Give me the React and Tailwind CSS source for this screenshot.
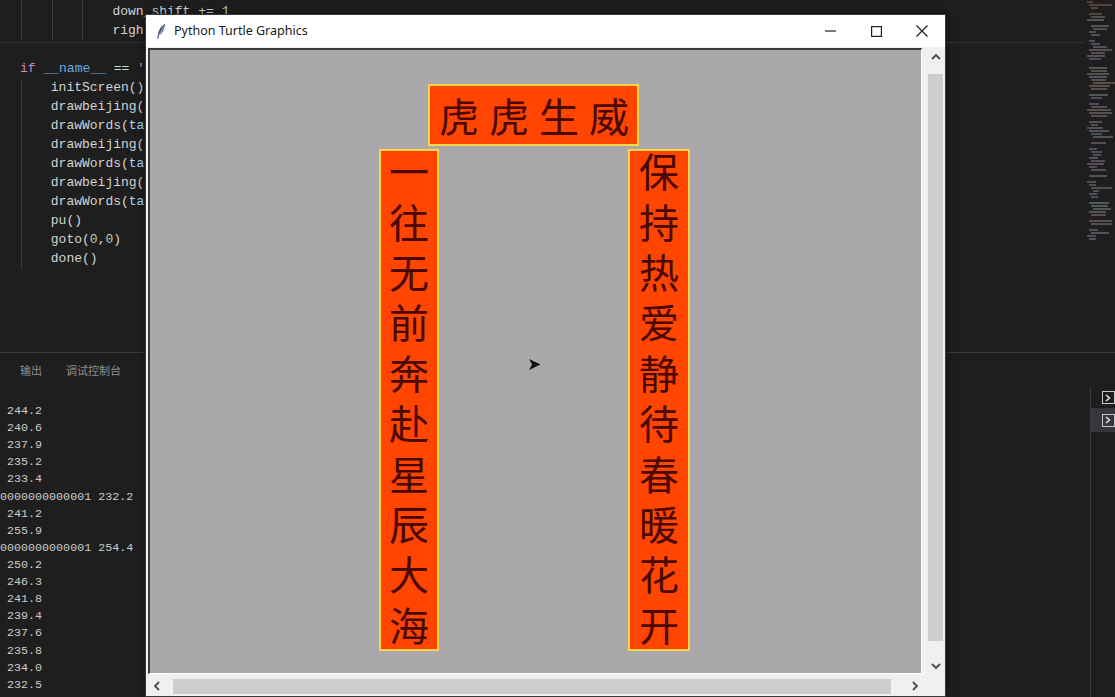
import React from "react";

const mono = "font-['Liberation_Mono','DejaVu_Sans_Mono',monospace]";

function Code({ indent = 0, children }) {
  return (
    <div className="h-[19px] leading-[19px] whitespace-pre" style={{ paddingLeft: 20 + indent * 7.7 }}>
      {children}
    </div>
  );
}

const outputLines = [
  " 244.2", " 240.6", " 237.9", " 235.2", " 233.4",
  "0000000000001 232.2", " 241.2", " 255.9", "0000000000001 254.4",
  " 250.2", " 246.3", " 241.8", " 239.4", " 237.6", " 235.8", " 234.0", " 232.5", " 237.3",
];

// deterministic pseudo-random minimap rows
const mini = Array.from({ length: 80 }, (_, i) => {
  const r = (Math.sin(i * 12.9898) * 43758.5453) % 1;
  const v = Math.abs(r);
  const blank = i % 9 === 3 || i % 13 === 7;
  const indent = [2, 4, 6, 8, 4, 6][i % 6];
  const w = blank ? 0 : Math.round(6 + v * 18);
  const colors = ["#8a8aa8", "#7f8aa6", "#9a8a96", "#8a9aa0", "#a08a80"];
  const c = i < 5 ? "#a07060" : colors[Math.floor(v * 5) % 5];
  return [indent, w, c];
});

function VBanner({ text, className }) {
  return (
    <div className={"absolute bg-[#ff4500] border-2 border-[#f7d64a] flex justify-center items-start overflow-visible " + className}>
      <div className="[writing-mode:vertical-rl] whitespace-nowrap text-[40px] leading-[44px] tracking-[10.4px] text-[#4a0800] mt-[1px]">
        {text}
      </div>
    </div>
  );
}

function Chevron({ dir }) {
  const d = {
    up: "M1 6 L5 2 L9 6",
    down: "M1 2 L5 6 L9 2",
    left: "M6 1 L2 5 L6 9",
    right: "M2 1 L6 5 L2 9",
  }[dir];
  const vert = dir === "up" || dir === "down";
  return (
    <svg width={vert ? 10 : 8} height={vert ? 8 : 10} viewBox={vert ? "0 0 10 8" : "0 0 8 10"}>
      <path d={d} fill="none" stroke="#4a4a4a" strokeWidth="1.8" />
    </svg>
  );
}

function TermIcon() {
  return (
    <div className="w-[14px] h-[13px] border border-[#c8c8c8] flex items-center pl-[2px]">
      <svg width="6" height="8" viewBox="0 0 6 8"><path d="M1 1 L4.5 4 L1 7" fill="none" stroke="#e0e0e0" strokeWidth="1.6" /></svg>
    </div>
  );
}

export default function App() {
  return (
    <div className={"relative w-[1115px] h-[697px] overflow-hidden bg-[#1e1e1e] flex flex-col " + mono}>
      {/* editor top */}
      <div className="h-[352px] shrink-0 flex flex-row relative">
        <div className="flex-1 relative pt-[2px] text-[13px] text-[#d4d4d4]">
          <div className="absolute left-0 right-0 top-[42px] h-px bg-[#303030]" />
          <div className="absolute left-[21px] top-0 h-[40px] w-px bg-[#3a3a3a]" />
          <div className="absolute left-[52px] top-0 h-[40px] w-px bg-[#3a3a3a]" />
          <div className="absolute left-[82px] top-0 h-[40px] w-px bg-[#3a3a3a]" />
          <div className="absolute left-[21px] top-[80px] h-[190px] w-px bg-[#3a3a3a]" />
          <Code indent={12}>
            <span className="text-[#d4d4d4]">down_shift </span><span>+= </span><span className="text-[#b5cea8]">1</span>
          </Code>
          <Code indent={12}>righ</Code>
          <Code> </Code>
          <Code>
            <span className="text-[#c586c0]">if</span> <span className="text-[#6fa8dc]">__name__</span> == <span className="text-[#ce9178]">'</span>
          </Code>
          <Code indent={4}>initScreen()</Code>
          <Code indent={4}>drawbeijing(</Code>
          <Code indent={4}>drawWords(<span className="text-[#9cdcfe]">ta</span></Code>
          <Code indent={4}>drawbeijing(</Code>
          <Code indent={4}>drawWords(<span className="text-[#9cdcfe]">ta</span></Code>
          <Code indent={4}>drawbeijing(</Code>
          <Code indent={4}>drawWords(<span className="text-[#9cdcfe]">ta</span></Code>
          <Code indent={4}>pu()</Code>
          <Code indent={4}>goto(<span className="text-[#b5cea8]">0</span>,<span className="text-[#b5cea8]">0</span>)</Code>
          <Code indent={4}>done()</Code>
        </div>
        <div className="w-[30px] pt-[1px] flex flex-col opacity-45">
          {mini.map(([l, w, c], i) => (
            <div key={i} className="h-[3px] flex flex-row">
              <div style={{ width: l }} />
              {w > 0 && <div className="h-[2px]" style={{ width: w, backgroundColor: c }} />}
            </div>
          ))}
        </div>
      </div>

      {/* bottom panel */}
      <div className="flex-1 min-h-0 overflow-hidden border-t border-[#3a3a3a] flex flex-col">
        <div className="h-[35px] shrink-0 flex flex-row items-center gap-[24px] pl-[20px] text-[11px] text-[#8f8f8f] font-['Noto_Sans_CJK_SC',sans-serif]">
          <span>输出</span>
          <span>调试控制台</span>
        </div>
        <div className="flex-1 flex flex-row">
          <div className="flex-1 pt-[15px] text-[11.7px] text-[#cccccc]">
            {outputLines.map((t, i) => (
              <div key={i} className="h-[17.12px] leading-[17.12px] whitespace-pre">{t}</div>
            ))}
          </div>
          <div className="w-[25px] border-l border-[#3c3c3c] flex flex-col -mt-[1px]">
            <div className="h-[21px] flex items-center pl-[11px]">
              <TermIcon />
            </div>
            <div className="h-[24px] bg-[#37363d] flex items-center pl-[11px]">
              <TermIcon />
            </div>
          </div>
        </div>
      </div>

      {/* turtle window */}
      <div className="absolute left-[145px] top-[14px] w-[801px] h-[683px] bg-[#f0f0f0] border border-[#3a3a3a] flex flex-col shadow-[0_0_8px_rgba(0,0,0,0.5)]">
        <div className="h-[32px] bg-white flex flex-row items-center shrink-0">
          <div className="w-[28px] flex justify-center pl-[2px]">
            <svg width="10" height="16" viewBox="0 0 10 16">
              <path d="M9 0.8 C5 3 2.5 7 1.8 12 L1.2 15.5 L2.4 15.5 L3 12.5 C6.5 10 8.8 5.5 9 0.8 Z" fill="#3d5373" />
              <path d="M8.2 2.5 L2.6 13" stroke="#dfe6ef" strokeWidth="0.6" />
            </svg>
          </div>
          <span className="text-[12.5px] text-[#1a1a1a] font-['Noto_Sans','Open_Sans',sans-serif] flex-1">Python Turtle Graphics</span>
          <div className="w-[46px] h-full flex items-center justify-center">
            <svg width="11" height="2" viewBox="0 0 11 2"><path d="M0 1 H11" stroke="#222" strokeWidth="1.2" /></svg>
          </div>
          <div className="w-[46px] h-full flex items-center justify-center">
            <svg width="11" height="11" viewBox="0 0 11 11"><rect x="0.6" y="0.6" width="9.8" height="9.8" fill="none" stroke="#222" strokeWidth="1.2" /></svg>
          </div>
          <div className="w-[46px] h-full flex items-center justify-center">
            <svg width="12" height="12" viewBox="0 0 12 12"><path d="M0.5 0.5 L11.5 11.5 M11.5 0.5 L0.5 11.5" stroke="#222" strokeWidth="1.2" /></svg>
          </div>
        </div>
        <div className="flex-1 grid grid-cols-[774px_17px] grid-rows-[626px_16px] gap-x-[5px] gap-y-[4px] pl-[2px] pt-[1px]">
          {/* canvas */}
          <div className="relative border-t-2 border-l-2 border-t-[#3a3a3a] border-l-[#3a3a3a] border-b border-r border-b-white border-r-white bg-[#aaa8ab] overflow-hidden font-['Noto_Sans_CJK_SC',sans-serif]">
            <div className="absolute left-[278px] top-[34px] w-[211px] h-[62px] bg-[#ff4500] border-2 border-[#f7d64a] flex flex-row items-center pl-[9px]">
              <span className="text-[40px] leading-none tracking-[10px] text-[#4a0800] whitespace-nowrap">虎虎生威</span>
            </div>
            <VBanner text="一往无前奔赴星辰大海" className="left-[229px] top-[99px] w-[60px] h-[502px]" />
            <VBanner text="保持热爱静待春暖花开" className="left-[478px] top-[99px] w-[62px] h-[502px]" />
            <svg className="absolute left-[379px] top-[309px]" width="12" height="11" viewBox="0 0 12 11">
              <path d="M0 0 L11.5 5.5 L0 11 L3 5.5 Z" fill="#111" />
            </svg>
          </div>
          {/* vertical scrollbar */}
          <div className="bg-[#f0f0f0] flex flex-col items-center">
            <div className="h-[17px] flex items-center justify-center"><Chevron dir="up" /></div>
            <div className="h-[9px]" />
            <div className="w-[15px] h-[567px] bg-[#cdcdcd]" />
            <div className="flex-1 flex items-end justify-center pb-[4px]"><Chevron dir="down" /></div>
          </div>
          {/* horizontal scrollbar */}
          <div className="bg-[#f0f0f0] flex flex-row items-center">
            <div className="w-[16px] flex justify-center pl-[2px]"><Chevron dir="left" /></div>
            <div className="w-[9px]" />
            <div className="w-[718px] h-[15px] bg-[#cdcdcd]" />
            <div className="flex-1 flex justify-end pr-[3px]"><Chevron dir="right" /></div>
          </div>
          <div />
        </div>
      </div>
    </div>
  );
}
